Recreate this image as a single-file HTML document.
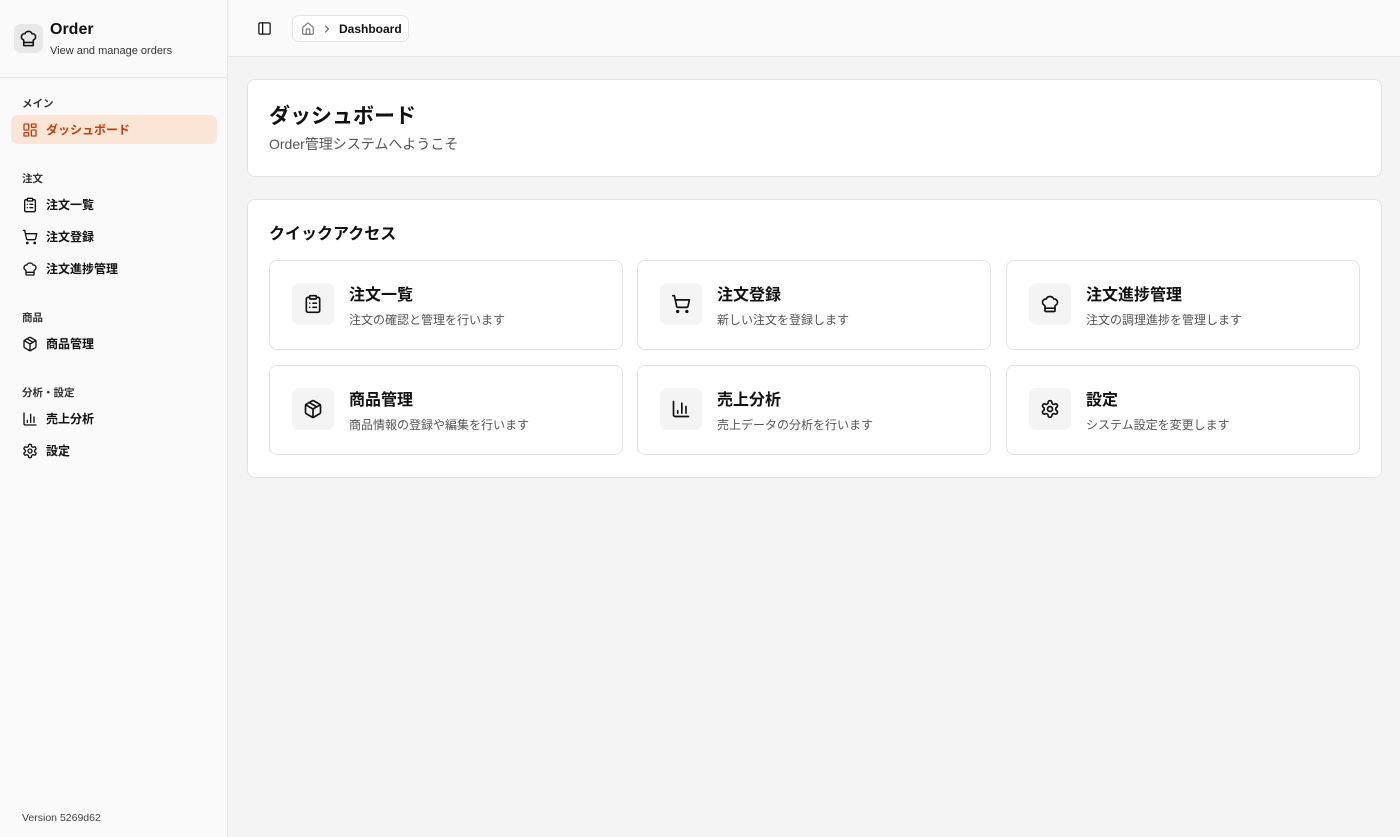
<!DOCTYPE html>
<html><head><meta charset="utf-8"><style>
*{box-sizing:border-box;margin:0;padding:0}
body{width:1400px;height:837px;font-family:"Liberation Sans","Noto Sans CJK JP",sans-serif;background:#f4f4f4;color:#111;position:relative;overflow:hidden}
svg{fill:none;stroke:currentColor;stroke-width:2;stroke-linecap:round;stroke-linejoin:round}
.side{position:absolute;left:0;top:0;width:228px;height:837px;background:#fafafa;border-right:1px solid #e5e5e5}
.brand{height:78px;border-bottom:1px solid #e5e5e5;position:relative}
.logo{position:absolute;left:14px;top:24px;width:29px;height:29px;border-radius:7px;background:#e8e8e8;display:flex;align-items:center;justify-content:center}
.bt{position:absolute;left:50px;top:21px;font-size:16px;font-weight:bold}
.bs{position:absolute;left:50px;top:45px;font-size:11px;color:#333}
.grp{position:absolute;left:22px;font-size:10.5px;font-weight:bold;color:#333}
.it{position:absolute;left:11px;width:206px;height:29px;border-radius:7px;display:flex;align-items:center;padding-left:11px;font-size:12px;font-weight:bold;gap:8px}
.it svg{width:16px;height:16px}
.act{background:#fbe5d7;color:#c2410c}
.ver{position:absolute;left:22px;top:812px;font-size:10.5px;color:#444}
.top{position:absolute;left:228px;top:0;right:0;height:57px;background:#fafafa;border-bottom:1px solid #e5e5e5}
.bc{position:absolute;left:64px;top:15px;height:27px;width:117px;border:1px solid #e5e5e5;border-radius:7px;background:#fff;display:flex;align-items:center;padding-left:8px;gap:6px;font-size:12px;font-weight:bold}
.card{position:absolute;left:247px;width:1135px;background:#fff;border:1px solid #e3e3e3;border-radius:8px}
.tile{position:absolute;width:354px;height:90px;border:1px solid #e3e3e3;border-radius:8px;background:#fff}
.ib{position:absolute;left:22px;top:22px;width:42px;height:42px;border-radius:7px;background:#f4f4f4;display:flex;align-items:center;justify-content:center}
.ib svg{width:20px;height:20px}
.tt{position:absolute;left:79px;top:20px;font-size:16px;font-weight:bold}
.td{position:absolute;left:79px;top:50px;font-size:12px;color:#555}
</style></head><body>
<div class="side">
<div class="brand"><div class="logo"><svg width="19" height="19" viewBox="0 0 24 24"><path d="M17 21a1 1 0 0 0 1-1v-5.35c0-.457.316-.844.727-1.041a4 4 0 0 0-2.134-7.589 5 5 0 0 0-9.186 0 4 4 0 0 0-2.134 7.588c.411.198.727.585.727 1.041V20a1 1 0 0 0 1 1Z"/><path d="M6 17h12"/></svg></div><div class="bt">Order</div><div class="bs">View and manage orders</div></div>
<div class="grp" style="top:96px">メイン</div>
<div class="it act" style="top:115px"><svg viewBox="0 0 24 24"><rect x="3" y="3" width="7" height="9" rx="1"/><rect x="14" y="3" width="7" height="5" rx="1"/><rect x="14" y="12" width="7" height="9" rx="1"/><rect x="3" y="16" width="7" height="5" rx="1"/></svg>ダッシュボード</div>
<div class="grp" style="top:171px">注文</div>
<div class="it" style="top:190px"><svg viewBox="0 0 24 24"><rect x="8" y="2" width="8" height="4" rx="1"/><path d="M16 4h2a2 2 0 0 1 2 2v14a2 2 0 0 1-2 2H6a2 2 0 0 1-2-2V6a2 2 0 0 1 2-2h2"/><path d="M12 11h4M12 16h4M8 11h.01M8 16h.01"/></svg>注文一覧</div>
<div class="it" style="top:222px"><svg viewBox="0 0 24 24"><circle cx="8" cy="21" r="1"/><circle cx="19" cy="21" r="1"/><path d="M2.05 2.05h2l2.66 12.42a2 2 0 0 0 2 1.58h9.78a2 2 0 0 0 1.95-1.57l1.65-7.43H5.12"/></svg>注文登録</div>
<div class="it" style="top:254px"><svg viewBox="0 0 24 24"><path d="M17 21a1 1 0 0 0 1-1v-5.350c0-.457.316-.844.727-1.041a4 4 0 0 0-2.134-7.589 5 5 0 0 0-9.186 0 4 4 0 0 0-2.134 7.588c.411.198.727.585.727 1.041V20a1 1 0 0 0 1 1Z"/><path d="M6 17h12"/></svg>注文進捗管理</div>
<div class="grp" style="top:310px">商品</div>
<div class="it" style="top:329px"><svg viewBox="0 0 24 24"><path d="M11 21.73a2 2 0 0 0 2 0l7-4A2 2 0 0 0 21 16V8a2 2 0 0 0-1-1.73l-7-4a2 2 0 0 0-2 0l-7 4A2 2 0 0 0 3 8v8a2 2 0 0 0 1 1.73z"/><path d="M12 22V12M3.29 7 12 12l8.71-5M7.5 4.27l9 5.15"/></svg>商品管理</div>
<div class="grp" style="top:385px">分析・設定</div>
<div class="it" style="top:404px"><svg viewBox="0 0 24 24"><path d="M3 3v16a2 2 0 0 0 2 2h16M18 17V9M13 17V5M8 17v-3"/></svg>売上分析</div>
<div class="it" style="top:436px"><svg viewBox="0 0 24 24"><path d="M12.22 2h-.44a2 2 0 0 0-2 2v.18a2 2 0 0 1-1 1.73l-.43.25a2 2 0 0 1-2 0l-.15-.08a2 2 0 0 0-2.73.73l-.22.38a2 2 0 0 0 .73 2.73l.15.1a2 2 0 0 1 1 1.72v.51a2 2 0 0 1-1 1.74l-.15.09a2 2 0 0 0-.73 2.73l.22.38a2 2 0 0 0 2.730.73l.15-.08a2 2 0 0 1 2 0l.43.25a2 2 0 0 1 1 1.73V20a2 2 0 0 0 2 2h.44a2 2 0 0 0 2-2v-.18a2 2 0 0 1 1-1.73l.43-.25a2 2 0 0 1 2 0l.15.08a2 2 0 0 0 2.73-.73l.22-.39a2 2 0 0 0-.73-2.73l-.15-.08a2 2 0 0 1-1-1.74v-.5a2 2 0 0 1 1-1.74l.15-.09a2 2 0 0 0 .73-2.73l-.22-.38a2 2 0 0 0-2.73-.73l-.15.08a2 2 0 0 1-2 0l-.43-.25a2 2 0 0 1-1-1.73V4a2 2 0 0 0-2-2z"/><circle cx="12" cy="12" r="3"/></svg>設定</div>
<div class="ver">Version 5269d62</div>
</div>
<div class="top">
<svg style="position:absolute;left:29px;top:21px" width="15" height="15" viewBox="0 0 24 24"><rect x="3" y="3" width="18" height="18" rx="2"/><path d="M9 3v18"/></svg>
<div class="bc"><svg width="14" height="14" viewBox="0 0 24 24" style="color:#777"><path d="M15 21v-8a1 1 0 0 0-1-1h-4a1 1 0 0 0-1 1v8"/><path d="M3 10a2 2 0 0 1 .709-1.528l7-5.999a2 2 0 0 1 2.582 0l7 5.999A2 2 0 0 1 21 10v9a2 2 0 0 1-2 2H5a2 2 0 0 1-2-2z"/></svg><svg width="12" height="12" viewBox="0 0 24 24" style="color:#555"><path d="m9 18 6-6-6-6"/></svg>Dashboard</div>
</div>
<div class="card" style="top:79px;height:98px">
<div style="position:absolute;left:21px;top:20px;font-size:21px;font-weight:bold">ダッシュボード</div>
<div style="position:absolute;left:21px;top:54px;font-size:14px;color:#555">Order管理システムへようこそ</div>
</div>
<div class="card" style="top:199px;height:279px">
<div style="position:absolute;left:21px;top:20px;font-size:16px;font-weight:bold">クイックアクセス</div>
</div>
<div class="tile" style="left:269px;top:260px"><div class="ib"><svg viewBox="0 0 24 24"><rect x="8" y="2" width="8" height="4" rx="1"/><path d="M16 4h2a2 2 0 0 1 2 2v14a2 2 0 0 1-2 2H6a2 2 0 0 1-2-2V6a2 2 0 0 1 2-2h2"/><path d="M12 11h4M12 16h4M8 11h.01M8 16h.01"/></svg></div><div class="tt">注文一覧</div><div class="td">注文の確認と管理を行います</div></div>
<div class="tile" style="left:637px;top:260px"><div class="ib"><svg viewBox="0 0 24 24"><circle cx="8" cy="21" r="1"/><circle cx="19" cy="21" r="1"/><path d="M2.05 2.05h2l2.66 12.42a2 2 0 0 0 2 1.58h9.78a2 2 0 0 0 1.95-1.57l1.65-7.43H5.12"/></svg></div><div class="tt">注文登録</div><div class="td">新しい注文を登録します</div></div>
<div class="tile" style="left:1006px;top:260px"><div class="ib"><svg viewBox="0 0 24 24"><path d="M17 21a1 1 0 0 0 1-1v-5.35c0-.457.316-.844.727-1.041a4 4 0 0 0-2.134-7.589 5 5 0 0 0-9.186 0 4 4 0 0 0-2.134 7.588c.411.198.727.585.727 1.041V20a1 1 0 0 0 1 1Z"/><path d="M6 17h12"/></svg></div><div class="tt">注文進捗管理</div><div class="td">注文の調理進捗を管理します</div></div>
<div class="tile" style="left:269px;top:365px"><div class="ib"><svg viewBox="0 0 24 24"><path d="M11 21.73a2 2 0 0 0 2 0l7-4A2 2 0 0 0 21 16V8a2 2 0 0 0-1-1.73l-7-4a2 2 0 0 0-2 0l-7 4A2 2 0 0 0 3 8v8a2 2 0 0 0 1 1.73z"/><path d="M12 22V12M3.29 7 12 12l8.71-5M7.5 4.27l9 5.15"/></svg></div><div class="tt">商品管理</div><div class="td">商品情報の登録や編集を行います</div></div>
<div class="tile" style="left:637px;top:365px"><div class="ib"><svg viewBox="0 0 24 24"><path d="M3 3v16a2 2 0 0 0 2 2h16M18 17V9M13 17V5M8 17v-3"/></svg></div><div class="tt">売上分析</div><div class="td">売上データの分析を行います</div></div>
<div class="tile" style="left:1006px;top:365px"><div class="ib"><svg viewBox="0 0 24 24"><path d="M12.22 2h-.44a2 2 0 0 0-2 2v.18a2 2 0 0 1-1 1.73l-.43.25a2 2 0 0 1-2 0l-.15-.08a2 2 0 0 0-2.73.73l-.22.38a2 2 0 0 0 .73 2.73l.15.1a2 2 0 0 1 1 1.72v.51a2 2 0 0 1-1 1.74l-.15.09a2 2 0 0 0-.73 2.73l.22.38a2 2 0 0 0 2.73.73l.15-.08a2 2 0 0 1 2 0l.43.25a2 2 0 0 1 1 1.73V20a2 2 0 0 0 2 2h.44a2 2 0 0 0 2-2v-.18a2 2 0 0 1 1-1.73l.43-.25a2 2 0 0 1 2 0l.15.08a2 2 0 0 0 2.73-.73l.22-.39a2 2 0 0 0-.73-2.73l-.15-.08a2 2 0 0 1-1-1.74v-.5a2 2 0 0 1 1-1.74l.15-.09a2 2 0 0 0 .73-2.73l-.22-.38a2 2 0 0 0-2.73-.73l-.15.08a2 2 0 0 1-2 0l-.43-.25a2 2 0 0 1-1-1.73V4a2 2 0 0 0-2-2z"/><circle cx="12" cy="12" r="3"/></svg></div><div class="tt">設定</div><div class="td">システム設定を変更します</div></div>
</body></html>
